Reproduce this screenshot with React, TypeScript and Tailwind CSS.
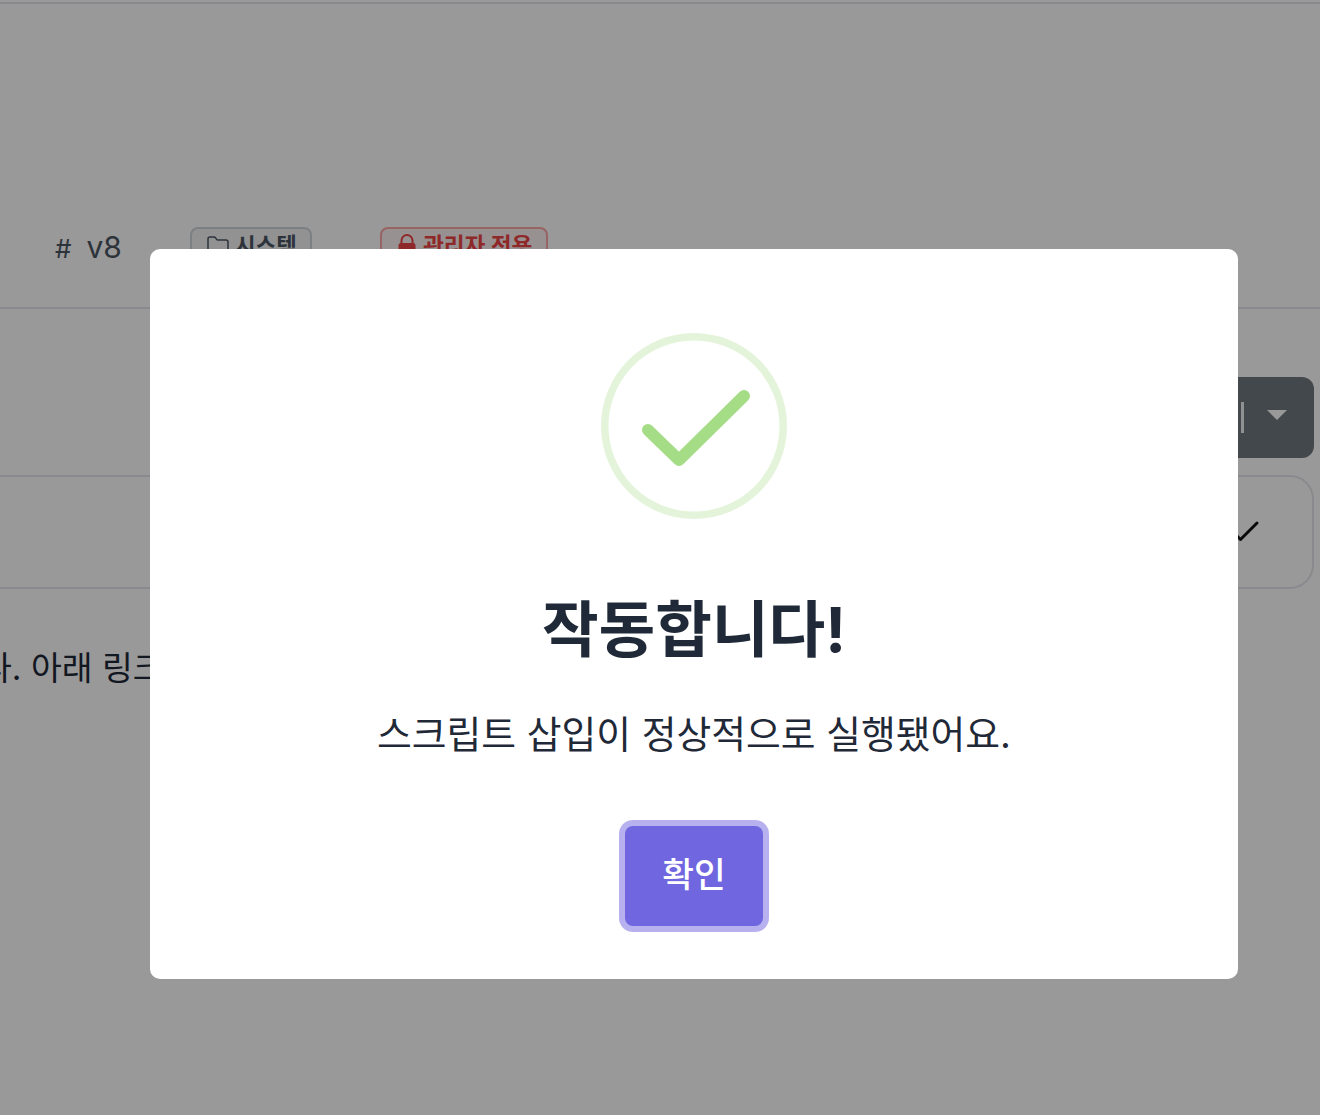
import React from 'react';
import { Check, Folder } from 'lucide-react';

const fontStack = { fontFamily: 'Inter, "Noto Sans CJK KR", sans-serif' };

function SuccessIcon() {
  return (
    <svg width="186" height="186" viewBox="0 0 186 186" fill="none">
      <circle cx="93" cy="93" r="89.25" stroke="#a5dc86" strokeOpacity="0.3" strokeWidth="7.5" />
      <path
        d="M47 97 L78 127 L143 63"
        stroke="#a5dc86"
        strokeWidth="12"
        strokeLinecap="round"
        strokeLinejoin="round"
      />
    </svg>
  );
}

function LockIcon() {
  return (
    <svg width="18" height="24" viewBox="0 0 18 24" fill="none" className="shrink-0">
      <path d="M3.5 10V6.5a5.5 5.5 0 0 1 11 0V10" stroke="currentColor" strokeWidth="2" />
      <rect x="0.5" y="9" width="17" height="13" rx="2.5" fill="currentColor" />
    </svg>
  );
}

export default function App() {
  return (
    <div className="relative h-[1115px] w-[1320px] overflow-hidden bg-white" style={fontStack}>
      {/* page behind the dialog */}
      <div className="mt-[2px] border-t-2 border-[#e5e7eb]">
        <div className="h-[305px] border-b-2 border-[#e5e7eb] pt-[223px]">
          <div className="flex items-start pl-[55px]">
            <span className="w-[135px] text-[30px] leading-[40px] text-[#4b5563]">
              <span className="mr-[15px] text-[26px]">#</span>v8
            </span>
            <span className="flex h-[44px] w-[122px] items-start gap-[5px] rounded-[8px] border-2 border-[#d1d5db] bg-[#f3f4f6] px-[14px] text-[22.4px] font-bold whitespace-nowrap text-[#4b5563]">
              <Folder size={24} strokeWidth={1.5} className="mt-[5px] shrink-0" />
              시스템
            </span>
            <span className="ml-[68px] flex h-[44px] w-[168px] items-start gap-[7px] rounded-[8px] border-2 border-[#fca5a5] bg-[#fef2f2] px-[16px] text-[22.6px] font-bold whitespace-nowrap text-[#ef4444]">
              <span className="mt-[5px]">
                <LockIcon />
              </span>
              관리자 전용
            </span>
          </div>
        </div>

        <div className="flex justify-end pt-[68px] pr-[6px]">
          <div className="flex h-[81px] w-[300px] items-center justify-end rounded-[12px] bg-[#71787f] pr-[27px]">
            <span className="mr-[23px] h-[31px] w-[3px] bg-white/90" />
            <span className="mb-[5px] h-0 w-0 border-x-[10px] border-t-[10px] border-x-transparent border-t-white" />
          </div>
        </div>

        <div className="mt-[17px] mr-[6px] -ml-[30px] flex h-[114px] items-center justify-end rounded-[24px] border-2 border-[#e5e7eb] pr-[49px]">
          <Check size={36} strokeWidth={2} className="text-[#111111]" />
        </div>

        <p className="-ml-[19px] pt-[55px] text-[33.5px] leading-[48px] whitespace-nowrap text-[#1f2937]">
          다. 아래 링크를 확인하세요
        </p>
      </div>

      {/* dialog overlay */}
      <div className="absolute inset-0 bg-black/40">
        <div className="mt-[249px] ml-[150px] flex h-[730px] w-[1088px] flex-col items-center rounded-[10px] bg-white pt-[84px]">
          <SuccessIcon />
          <h2 className="mt-[66px] text-[61.6px] leading-[90px] font-bold text-[#1f2937]">작동합니다!</h2>
          <p className="mt-[32px] text-[37.8px] leading-[54px] text-[#1f2937]">
            스크립트 삽입이 정상적으로 실행됐어요.
          </p>
          <button className="mt-[65px] h-[100px] w-[138px] rounded-[8px] bg-[#7066e0] pb-[2px] text-[34.5px] font-medium text-white ring-[6px] ring-[#7066e0]/50">
            확인
          </button>
        </div>
      </div>
    </div>
  );
}
